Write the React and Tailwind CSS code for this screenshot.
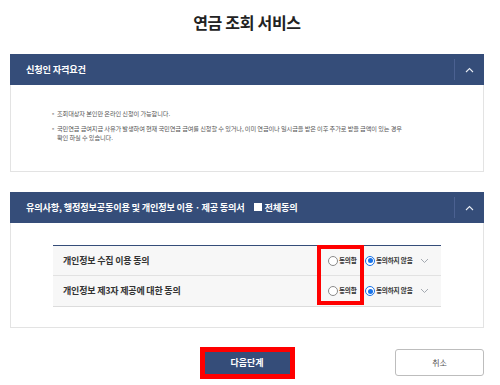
import React from 'react';

const ChevronUp = () => (
  <svg width="9" height="6" viewBox="0 0 9 6" fill="none">
    <path d="M1 5 L4.5 1.5 L8 5" stroke="#e8ecf3" strokeWidth="1.1" />
  </svg>
);

const ChevronDown = () => (
  <svg width="9" height="6" viewBox="0 0 9 6" fill="none">
    <path d="M1 1 L4.5 4.5 L8 1" stroke="#9aa0a8" strokeWidth="0.9" />
  </svg>
);

const Radio = ({ checked }) =>
  checked ? (
    <span className="w-[10px] h-[10px] shrink-0 rounded-full border-[1.5px] border-[#1a73e8] bg-white flex items-center justify-center">
      <span className="w-[5px] h-[5px] rounded-full bg-[#1a73e8]" />
    </span>
  ) : (
    <span className="w-[10px] h-[10px] shrink-0 rounded-full border border-[#8a8a8a] bg-white" />
  );

const PanelHeader = ({ children }) => (
  <div className="h-[31px] bg-[#354d79] flex items-center">
    <div className="flex-1 pl-[16px] flex items-center text-white text-[9.2px] font-bold tracking-[-0.2px]">
      {children}
    </div>
    <div className="w-[30px] h-[21px] border-l border-[#4b6191] flex items-center justify-center">
      <ChevronUp />
    </div>
  </div>
);

const consentRows = ['개인정보 수집 이용 동의', '개인정보 제3자 제공에 대한 동의'];

const App = () => {
  return (
    <div
      className="w-[500px] h-[385px] bg-white flex flex-col overflow-hidden"
      style={{ fontFamily: '"Noto Sans CJK KR", "Noto Sans", sans-serif' }}
    >
      {/* Title */}
      <div className="h-[54px] pt-[13px] pr-[6px]">
        <h1 className="text-center text-[16px] leading-[18px] font-bold text-[#222] tracking-[-0.3px]">
          연금 조회 서비스
        </h1>
      </div>

      {/* 신청인 자격요건 */}
      <div className="ml-[10px] mr-[16px]">
        <PanelHeader>신청인 자격요건</PanelHeader>
        <div className="h-[87px] border-x border-b border-[#e3e3e3] pt-[24px] pl-[39px] text-[6.2px] leading-[9px] text-[#555] tracking-[-0.1px]">
          <div className="flex">
            <span className="w-[7px] text-[#aaa]">▪</span>
            <span className="whitespace-nowrap">조회대상자 본인만 온라인 신청이 가능합니다.</span>
          </div>
          <div className="flex mt-[6px]">
            <span className="w-[7px] text-[#aaa]">▪</span>
            <span className="whitespace-nowrap">
              국민연금 급여지급 사유가 발생하여 현재 국민연금 급여를 신청할 수 있거나, 이미 연금이나 일시금을 받은 이후 추가로 받을 금액이 있는 경우
              <br />
              확인 하실 수 있습니다.
            </span>
          </div>
        </div>
      </div>

      {/* 동의서 */}
      <div className="ml-[10px] mr-[16px] mt-[20px]">
        <PanelHeader>
          <span>유의사항, 행정정보공동이용 및 개인정보 이용ㆍ제공 동의서</span>
          <span className="ml-[9px] w-[8px] h-[8px] bg-white" />
          <span className="ml-[3px]">전체동의</span>
        </PanelHeader>
        <div className="h-[105px] border-x border-b border-[#e3e3e3] pt-[22px] px-[42px]">
          <div className="relative border-t border-[#354d79] border-b border-b-[#dcdcdc]">
            {consentRows.map((label, i) => (
              <div
                key={label}
                className={`h-[30px] bg-[#f7f7f7] flex items-center justify-between pl-[10px] pr-[12px] ${
                  i === 0 ? 'border-b border-[#e2e2e2]' : ''
                }`}
              >
                <span className="text-[9px] font-bold text-[#333] tracking-[-0.2px]">{label}</span>
                <div className="flex items-center text-[6.6px] font-bold text-[#333] tracking-[-0.2px]">
                  <Radio />
                  <span className="ml-[1px] w-[19px] whitespace-nowrap">동의함</span>
                  <span className="ml-[7px]">
                    <Radio checked />
                  </span>
                  <span className="ml-[1px] w-[39px] whitespace-nowrap">동의하지 않음</span>
                  <span className="ml-[5px] flex">
                    <ChevronDown />
                  </span>
                </div>
              </div>
            ))}
            <div className="absolute left-[264px] top-[-1px] w-[47px] h-[60px] border-[4px] border-[#ff0000]" />
          </div>
        </div>
      </div>

      {/* Buttons */}
      <div className="ml-[10px] mr-[16px] mt-[21px] h-[27px] grid grid-cols-[1fr_auto_1fr] items-center">
        <div />
        <button className="w-[85px] h-[22px] bg-[#354d79] text-white text-[9px] font-bold outline-[5px] outline-solid outline-[#ff0000]">
          다음단계
        </button>
        <div className="flex justify-end">
          <button className="w-[89px] h-[27px] border border-[#bdbdbd] rounded-[3px] bg-white text-[#555] text-[8px]">
            취소
          </button>
        </div>
      </div>
    </div>
  );
};

export default App;
